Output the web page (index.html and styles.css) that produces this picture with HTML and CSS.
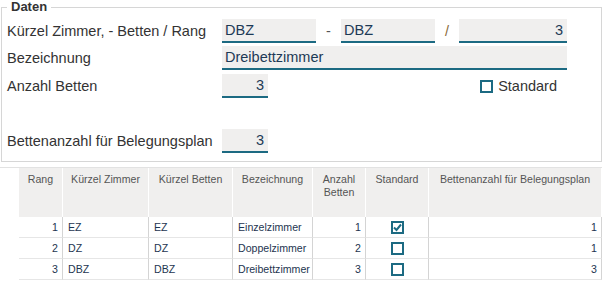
FILE: index.html
```html
<!DOCTYPE html>
<html>
<head>
    <title>Zimmertypen</title>
    <link rel="stylesheet" href="styles.css">
</head>
<body>
    <fieldset class="daten">
        <legend>Daten</legend>

        <div class="row row-first">
            <label class="lbl">Kürzel Zimmer, - Betten / Rang</label>
            <div class="field w94">DBZ</div>
            <span class="sep sep-dash">-</span>
            <div class="field w94">DBZ</div>
            <span class="sep sep-slash">/</span>
            <div class="field w108 num">3</div>
        </div>

        <div class="row row-second">
            <label class="lbl">Bezeichnung</label>
            <div class="field wfull">Dreibettzimmer</div>
        </div>

        <div class="row row-third">
            <label class="lbl">Anzahl Betten</label>
            <div class="field w46 num">3</div>
            <label class="check-wrap">
                <span class="box"></span>
                Standard
            </label>
        </div>

        <div class="row row-fourth">
            <label class="lbl">Bettenanzahl für Belegungsplan</label>
            <div class="field w46 num">3</div>
        </div>
    </fieldset>

    <table class="grid">
        <colgroup>
            <col style="width:19px">
            <col style="width:44px">
            <col style="width:86px">
            <col style="width:84px">
            <col style="width:80px">
            <col style="width:53px">
            <col style="width:63px">
            <col style="width:173px">
        </colgroup>
        <thead>
            <tr>
                <th class="sel"></th>
                <th>Rang</th>
                <th>Kürzel Zimmer</th>
                <th>Kürzel Betten</th>
                <th>Bezeichnung</th>
                <th>Anzahl<br>Betten</th>
                <th>Standard</th>
                <th>Bettenanzahl für Belegungsplan</th>
            </tr>
        </thead>
        <tbody>
            <tr>
                <td class="sel"></td>
                <td class="num">1</td>
                <td>EZ</td>
                <td>EZ</td>
                <td>Einzelzimmer</td>
                <td class="num">1</td>
                <td class="center">
                    <span class="cb">
                        <svg width="9" height="9" viewBox="0 0 9 9"><path d="M1 4.5 L3.5 7 L8 1.5" fill="none" stroke="#1c6a82" stroke-width="2"/></svg>
                    </span>
                </td>
                <td class="num">1</td>
            </tr>
            <tr>
                <td class="sel"></td>
                <td class="num">2</td>
                <td>DZ</td>
                <td>DZ</td>
                <td>Doppelzimmer</td>
                <td class="num">2</td>
                <td class="center"><span class="cb"></span></td>
                <td class="num">1</td>
            </tr>
            <tr>
                <td class="sel"></td>
                <td class="num">3</td>
                <td>DBZ</td>
                <td>DBZ</td>
                <td>Dreibettzimmer</td>
                <td class="num">3</td>
                <td class="center"><span class="cb"></span></td>
                <td class="num">3</td>
            </tr>
        </tbody>
    </table>
</body>
</html>
```

FILE: styles.css
```css
body {
    margin: 0;
    font-family: "Liberation Sans", Arial, sans-serif;
    color: #333;
    background-color: #fff;
}

/* Formular oben */
.daten {
    margin: 0 1px;
    padding: 5px 0 8px 5px;
    border: 1px solid #d6d6d6;
}

.daten legend {
    padding: 0 4px;
    font-size: 13px;
    font-weight: bold;
    line-height: 14px;
    color: #333;
}

.row {
    display: flex;
    align-items: center;
    width: 560px;
    height: 24px;
}

.row-second {
    margin-top: 3px;
}

.row-third {
    margin-top: 4px;
}

.row-fourth {
    margin-top: 31px;
}

.lbl {
    width: 215px;
    flex: none;
    font-size: 14.5px;
    color: #333;
}

.field {
    box-sizing: border-box;
    height: 24px;
    padding: 0 4px 0 3px;
    background-color: #f0efee;
    border-bottom: 2px solid #1c6a82;
    font-size: 14.5px;
    line-height: 23px;
    color: #1d3a56;
    flex: none;
}

.field.num {
    text-align: right;
}

.w94 {
    width: 94px;
}

.w108 {
    width: 108px;
}

.w46 {
    width: 46px;
}

.wfull {
    width: 345px;
}

.sep {
    flex: none;
    font-size: 14.5px;
    color: #555;
    text-align: center;
}

.sep-dash {
    width: 25px;
}

.sep-slash {
    width: 24px;
    color: #8a6a3a;
}

.check-wrap {
    display: flex;
    align-items: center;
    gap: 5px;
    margin-left: auto;
    margin-right: 10px;
    font-size: 14.5px;
    color: #333;
}

.box {
    box-sizing: border-box;
    width: 13px;
    height: 13px;
    border: 2px solid #1c6a82;
}

/* Tabelle */
.grid {
    margin-top: 5px;
    width: 602px;
    table-layout: fixed;
    border-collapse: separate;
    border-spacing: 0;
    border-top: 1px solid #e2e2e2;
    font-size: 10.6px;
}

.grid th,
.grid td {
    box-sizing: border-box;
    padding: 0 5px;
    overflow: hidden;
    white-space: nowrap;
}

.grid th {
    height: 49px;
    padding-top: 5px;
    vertical-align: top;
    background-color: #f0efee;
    border-right: 1px solid #fff;
    font-weight: normal;
    line-height: 13px;
    color: #555;
    text-align: center;
}

.grid th.sel {
    background-color: #fff;
}

.grid td {
    height: 21px;
    border-right: 1px solid #d4d4d4;
    border-bottom: 1px solid #e6e6e6;
    color: #1d3550;
    vertical-align: middle;
}

.grid td.sel {
    border-right: none;
    border-bottom: none;
}

.grid td.num {
    text-align: right;
    padding-right: 4px;
}

.grid td.center {
    text-align: center;
}

.cb {
    display: inline-flex;
    align-items: center;
    justify-content: center;
    box-sizing: border-box;
    width: 13px;
    height: 13px;
    border: 2px solid #1c6a82;
    vertical-align: middle;
}
```
